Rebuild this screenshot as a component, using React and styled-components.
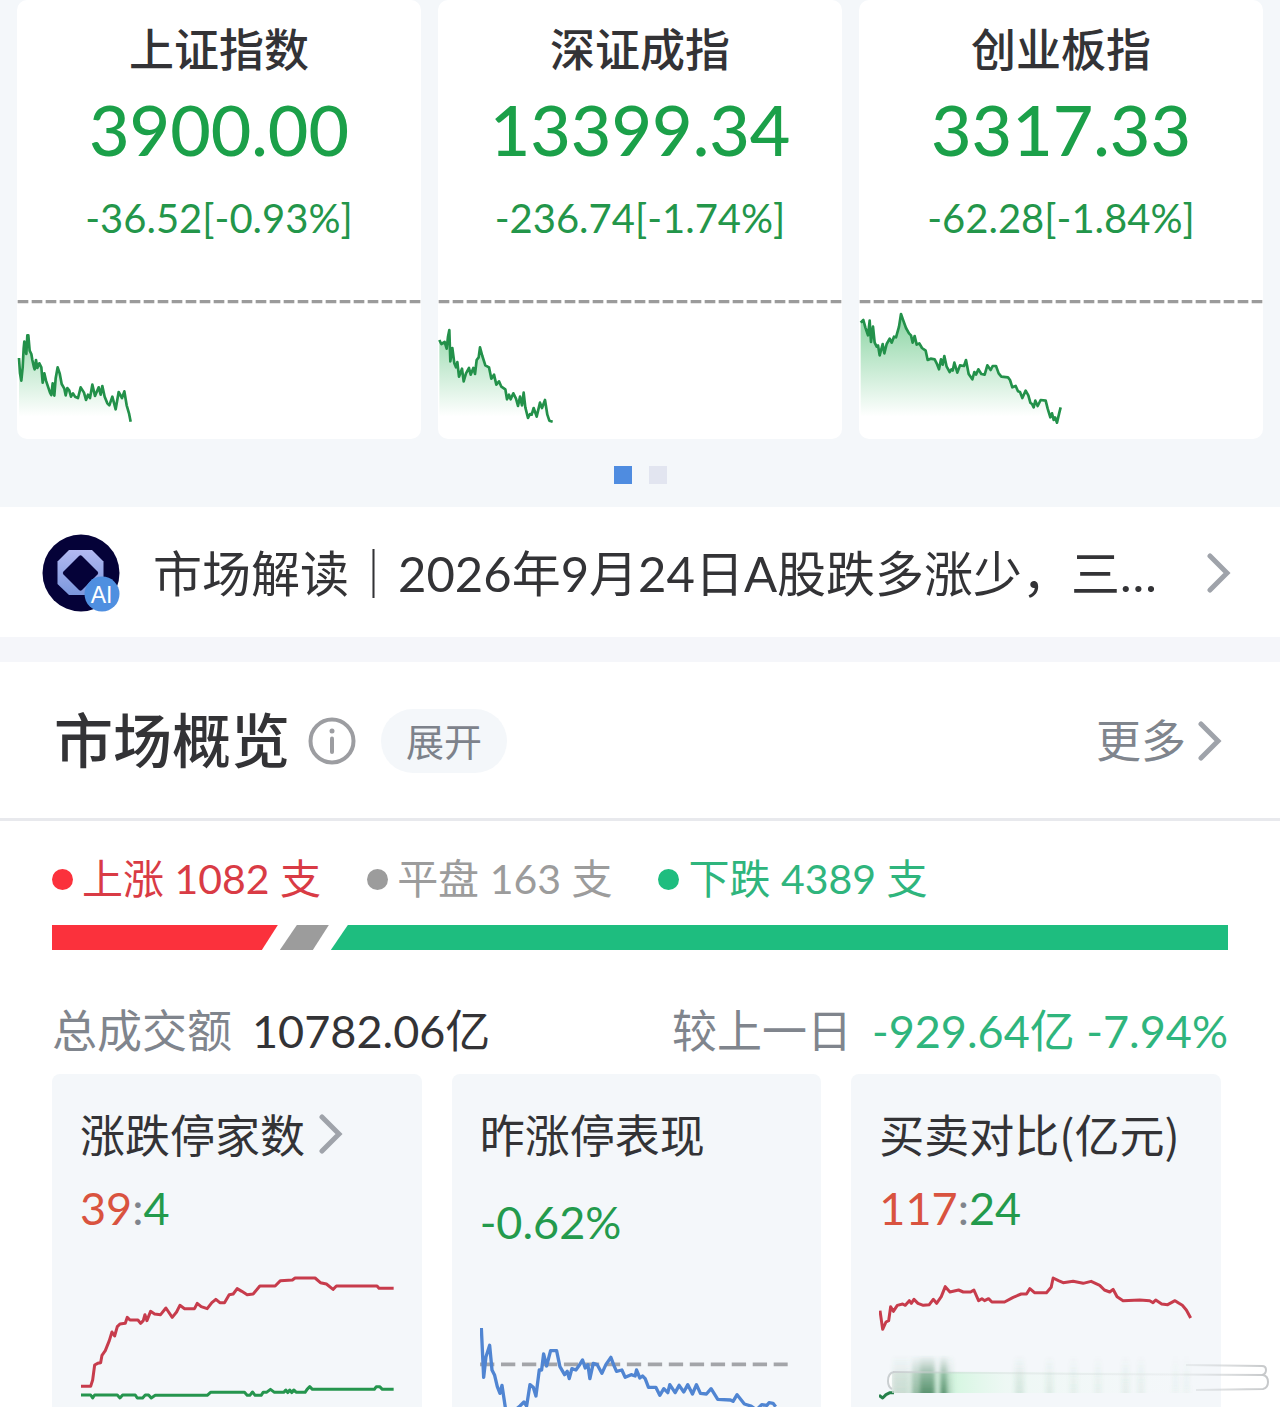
import styled, { createGlobalStyle } from "styled-components";

// ── Global ─────────────────────────────────────────────────────

const GlobalStyle = createGlobalStyle`
   * {
      box-sizing: border-box;
   }

   body {
      margin: 0;
      background: #ffffff;
      font-family: Lato, "Noto Sans CJK SC", sans-serif;
      color: #333336;
   }

   h2, h3, p {
      margin: 0;
      font-weight: 400;
   }

   a {
      color: inherit;
      text-decoration: none;
   }

   button {
      border: none;
      padding: 0;
      font-family: inherit;
      cursor: pointer;
   }
`;

// ── Styled ─────────────────────────────────────────────────────

const Page = styled.main`
   position: relative;
   overflow: hidden;
`;

const Hero = styled.section`
   padding: 0 17px 23px;
   background: #f4f7fa;
`;

const IndexGrid = styled.div`
   display: grid;
   grid-template-columns: repeat(3, minmax(0, 1fr));
   gap: 17px;
`;

const IndexCard = styled.article`
   display: flex;
   flex-direction: column;
   align-items: center;
   padding-top: 18px;
   background: #ffffff;
   border-radius: 10px;
   overflow: hidden;
   white-space: nowrap;
`;

const IndexName = styled.h3`
   font-size: 45px;
   line-height: 64px;
   font-weight: 500;
`;

const IndexPrice = styled.p`
   font-size: 70px;
   line-height: 94px;
   font-weight: 500;
   color: #1ba049;
`;

const IndexChange = styled.p`
   font-size: 40px;
   line-height: 84px;
   color: #23964a;
`;

const IndexSvg = styled.svg`
   display: block;
   width: 100%;
   height: 159px;
   margin-top: 20px;
`;

const Pager = styled.div`
   display: flex;
   justify-content: center;
   gap: 17px;
   padding-top: 27px;
`;

const PagerDot = styled.button`
   width: 18px;
   height: 18px;
   background: ${({ $active }) => ($active ? "#4f8ce0" : "#e2e5f0")};
`;

const NewsRow = styled.a`
   display: flex;
   align-items: center;
   height: 130px;
   padding: 2px 49px 0 42px;
`;

const Logo = styled.svg`
   width: 78px;
   height: 78px;
   flex-shrink: 0;
`;

const NewsText = styled.span`
   flex: 1;
   min-width: 0;
   margin-left: 33px;
   font-size: 49px;
   line-height: 72px;
   white-space: nowrap;
   overflow: hidden;
`;

const ChevronSvg = styled.svg`
   width: 24px;
   height: 42px;
   flex-shrink: 0;
   fill: none;
   stroke: #9fa3aa;
   stroke-width: 5;
   stroke-linecap: round;
`;

const Strip = styled.div`
   height: 25px;
   background: #f5f6fa;
`;

const SectionHead = styled.header`
   display: flex;
   align-items: center;
   height: 159px;
   padding: 2px 58px 0 54px;
   border-bottom: 3px solid #e8e9ed;
`;

const SectionTitle = styled.h2`
   font-size: 59px;
   line-height: 84px;
   font-weight: 500;
`;

const InfoBtn = styled.button`
   display: flex;
   margin-left: 18px;
   background: none;
`;

const ExpandBtn = styled.button`
   height: 64px;
   margin-left: 25px;
   padding: 0 25px;
   border-radius: 32px;
   background: #f4f7fa;
   color: #7d828b;
   font-size: 38px;
   line-height: 64px;
`;

const MoreLink = styled.a`
   display: flex;
   align-items: center;
   gap: 12px;
   margin-left: auto;
   font-size: 45px;
   line-height: 64px;
   color: #80858d;
`;

const Overview = styled.section`
   padding: 28px 52px 0;
`;

const Legend = styled.div`
   display: flex;
   gap: 46px;
   white-space: nowrap;
`;

const LegendItem = styled.span`
   display: flex;
   align-items: center;
   gap: 9px;
   font-size: 41px;
   line-height: 60px;
   color: ${({ $color }) => $color};

   &::before {
      content: "";
      width: 21px;
      height: 21px;
      border-radius: 50%;
      background: ${({ $dot }) => $dot};
   }
`;

const Breadth = styled.div`
   display: flex;
   gap: 2px;
   height: 25px;
   margin-top: 16px;
`;

const Segment = styled.div`
   min-width: 49px;
   flex: ${({ $fill }) => ($fill ? "1" : "none")};
   background: ${({ $color }) => $color};
   clip-path: ${({ $shape }) => $shape};
`;

const TotalRow = styled.div`
   display: flex;
   justify-content: space-between;
   margin-top: 48px;
   font-size: 45px;
   line-height: 66px;
   white-space: nowrap;
`;

const Total = styled.p`
   display: flex;
   gap: 20px;
   color: ${({ $color }) => $color};
`;

const Muted = styled.span`
   color: #80858d;
`;

const StatGrid = styled.div`
   display: grid;
   grid-template-columns: repeat(3, minmax(0, 1fr));
   gap: 30px;
   margin-top: 10px;
   padding-right: 7px;
`;

const StatCard = styled.article`
   display: flex;
   flex-direction: column;
   min-height: 333px;
   padding: 28px 28px 0;
   background: #f4f7fa;
   border-radius: 8px 8px 0 0;
   white-space: nowrap;
`;

const StatTitle = styled.h3`
   display: flex;
   align-items: center;
   gap: 14px;
   font-family: "Noto Sans CJK SC", sans-serif;
   font-size: 45px;
   line-height: 64px;
`;

const StatValue = styled.p`
   margin-top: ${({ $single }) => ($single ? "30px" : "16px")};
   font-size: 45px;
   line-height: 52px;
   color: #239a4c;
`;

const Up = styled.span`
   color: #d9533f;
`;

const StatSvg = styled.svg`
   display: block;
   width: 100%;
   height: 137px;
   margin-top: auto;
`;

const Line = styled.polyline`
   fill: none;
   stroke: ${({ $color }) => $color};
   stroke-width: ${({ $width }) => $width || 9};
   stroke-linejoin: round;
`;

const Smear = styled.svg`
   position: absolute;
   right: 8px;
   bottom: 10px;
   width: 386px;
   height: 46px;
   pointer-events: none;
`;

// ── Data ───────────────────────────────────────────────────────

const INDEXES = [
   {
      key: "sh",
      name: "上证指数",
      price: "3900.00",
      change: "-36.52[-0.93%]",
      left: 51,
      points:
         "57,234 60,280 64,302 68,262 71,205 73,185 76,207 79,222 82,166 85,166 89,212 94,222 97,240 102,262 104,268 108,240 112,264 118,250 124,262 128,308 133,280 138,302 144,320 150,338 154,345 158,310 163,347 167,295 173,262 179,280 185,312 193,326 197,346 202,324 208,332 213,350 219,340 225,350 234,354 242,322 252,338 258,360 264,344 270,354 277,314 285,348 296,322 302,344 307,318 314,350 322,370 328,376 337,350 347,388 356,336 366,354 373,334 380,376 387,400 392,425",
   },
   {
      key: "sz",
      name: "深证成指",
      price: "13399.34",
      change: "-236.74[-1.74%]",
      left: 24,
      points:
         "28,180 34,192 44,186 50,206 54,170 58,150 61,244 67,204 73,250 78,262 82,246 87,290 96,266 101,304 108,280 117,264 122,284 130,264 135,282 140,240 146,232 150,202 157,228 166,256 177,262 184,296 192,284 199,314 207,304 214,320 226,328 231,358 237,344 242,358 250,340 258,356 264,378 270,350 276,376 281,338 286,382 294,414 300,402 305,404 311,384 320,410 330,368 336,384 345,360 352,404 358,422 368,425",
   },
   {
      key: "cyb",
      name: "创业板指",
      price: "3317.33",
      change: "-62.28[-1.84%]",
      left: 27,
      points:
         "32,128 40,120 46,142 54,166 59,122 63,186 69,140 74,188 80,200 84,196 89,226 98,192 103,220 110,192 119,176 125,188 132,170 138,172 147,140 153,102 160,122 168,144 177,160 183,166 188,188 194,168 200,194 208,190 216,204 227,212 233,240 242,236 254,238 260,250 267,268 273,238 278,254 283,228 290,260 299,276 304,268 308,272 313,248 322,278 330,256 342,258 348,240 356,282 367,298 373,276 378,284 385,268 394,282 404,284 412,256 422,270 428,258 438,258 446,280 454,290 474,292 480,300 487,322 497,318 504,334 510,336 517,354 527,332 535,346 541,368 546,372 551,382 556,362 563,378 572,360 587,362 593,386 601,412 606,400 611,420 615,412 621,428 628,398 632,382",
   },
];

const BREADTH = [
   {
      key: "up",
      label: "上涨",
      count: 1082,
      color: "#d93b45",
      fill: "#fb313c",
      shape: "polygon(0 0, 100% 0, calc(100% - 16px) 100%, 0 100%)",
   },
   {
      key: "flat",
      label: "平盘",
      count: 163,
      color: "#9c9c9c",
      fill: "#9c9c9c",
      shape: "polygon(17px 0, 100% 0, calc(100% - 16px) 100%, 0 100%)",
   },
   {
      key: "down",
      label: "下跌",
      count: 4389,
      color: "#2fb57d",
      fill: "#1ebd7f",
      shape: "polygon(17px 0, 100% 0, 100% 100%, 0 100%)",
   },
];

const BREADTH_TOTAL = BREADTH.reduce((sum, b) => sum + b.count, 0);

const LIMIT_UP =
   "153,949 182,949 188,930 194,885 203,880 212,878 216,856 226,842 238,812 246,786 254,798 262,770 270,762 286,760 292,742 300,750 324,750 332,760 340,752 345,734 351,752 362,724 374,732 392,734 408,714 427,742 440,726 450,706 464,716 494,716 502,700 514,710 532,716 546,698 558,688 570,698 584,698 598,674 610,672 622,656 636,664 652,674 670,672 690,648 736,648 752,632 788,630 796,624 856,624 872,638 890,642 910,658 920,648 1042,648 1048,655 1092,655";
const LIMIT_DOWN =
   "153,975 182,975 188,984 194,975 262,975 270,984 278,975 316,975 322,984 338,984 346,975 356,975 364,984 376,976 532,976 542,967 644,967 652,976 660,976 668,966 676,976 694,976 700,967 710,967 722,958 734,967 762,967 768,960 774,968 780,960 786,968 792,960 800,967 826,967 832,958 840,950 848,958 1034,958 1040,950 1050,950 1058,958 1092,958";
const YESTERDAY =
   "124,774 131,922 138,860 149,826 156,900 164,916 172,950 180,970 186,946 196,1012 214,1030 240,1008 252,996 260,1008 270,944 280,952 288,978 298,900 305,900 311,852 320,888 332,842 350,842 360,890 374,914 382,904 388,926 396,896 408,900 418,886 428,870 436,894 444,884 450,926 460,880 472,884 486,910 498,884 513,862 522,886 530,904 546,900 556,922 574,914 586,918 590,900 600,924 608,918 616,926 626,952 648,952 660,976 672,956 684,968 690,944 706,968 718,946 732,966 744,944 758,972 770,944 782,970 800,972 814,956 834,988 872,990 880,994 892,974 914,1002 934,1008 950,1020 966,1004 982,1006 988,998 1000,1000 1008,1010";
const BUY =
   "120,722 128,778 138,756 146,752 152,710 160,724 172,706 188,702 196,706 208,692 214,700 222,688 234,700 250,706 268,704 280,688 290,700 304,680 316,650 330,666 356,660 370,666 392,666 402,660 416,692 426,686 434,692 446,686 456,696 494,696 520,682 544,672 560,672 570,656 584,668 620,668 634,652 640,624 656,632 670,638 700,634 730,640 754,634 780,646 794,660 810,666 820,658 832,680 850,692 900,690 930,692 940,698 948,690 966,702 984,704 1006,692 1018,700 1028,706 1040,720 1053,744";

// ── Parts ──────────────────────────────────────────────────────

const Chevron = () => (
   <ChevronSvg viewBox="0 0 24 42" aria-hidden="true">
      <path d="M3 4 L20 21 L3 38" />
   </ChevronSvg>
);

const IndexChart = ({ id, left, points }) => {
   const first = points.split(",")[0];
   const last = points.split(" ").pop().split(",")[0];

   return (
      <IndexSvg
         viewBox={`${left} 0 1212 477`}
         preserveAspectRatio="none"
         aria-hidden="true"
      >
         <defs>
            <linearGradient
               id={`fade-${id}`}
               gradientUnits="userSpaceOnUse"
               x1="0"
               y1="120"
               x2="0"
               y2="410"
            >
               <stop offset="0" stopColor="#35b55f" stopOpacity="0.55" />
               <stop offset="1" stopColor="#35b55f" stopOpacity="0" />
            </linearGradient>
         </defs>
         <polygon
            points={`${first},420 ${points} ${last},420`}
            fill={`url(#fade-${id})`}
         />
         <line
            x1={left + 2}
            x2={left + 1212}
            y1="65"
            y2="65"
            stroke="#9b9b9b"
            strokeWidth="10"
            strokeDasharray="32 10"
         />
         <Line $color="#23914a" $width={8} points={points} />
      </IndexSvg>
   );
};

const BrandLogo = () => (
   <Logo viewBox="0 0 78 78" aria-hidden="true">
      <defs>
         <linearGradient id="brand" x1="0" y1="0" x2="0" y2="1">
            <stop offset="0" stopColor="#b3b9f2" />
            <stop offset="1" stopColor="#7b97dc" />
         </linearGradient>
      </defs>
      <circle cx="39" cy="39" r="38.5" fill="#050238" />
      <path
         d="M27 16 H50 L61.500 27.500 V50.500 L50 61 H27 L15.500 50 V27.500 Z"
         fill="url(#brand)"
      />
      <path
         d="M37 22 Q38.500 20.500 40 22 L55.500 37.500 Q57 39 55.500 40.500 L40 56 Q38.500 57.500 37 56 L21.500 40.500 Q20 39 21.500 37.500 Z"
         fill="#050238"
      />
      <circle cx="60" cy="60" r="17.500" fill="#4f8fe0" />
      <text
         x="59.500"
         y="69"
         textAnchor="middle"
         fontFamily="Liberation Sans, sans-serif"
         fontSize="23"
         fill="#ffffff"
      >
         AI
      </text>
   </Logo>
);

const InfoIcon = () => (
   <svg width="48" height="48" viewBox="0 0 48 48" fill="none" aria-hidden="true">
      <circle cx="24" cy="24" r="21.500" stroke="#9c9da1" strokeWidth="4" />
      <circle cx="24" cy="14" r="2.500" fill="#9c9da1" />
      <path d="M24 21.500 V35" stroke="#9c9da1" strokeWidth="4" strokeLinecap="round" />
   </svg>
);

const StatChart = ({ left, children }) => (
   <StatSvg
      viewBox={`${left} 600 942 411`}
      preserveAspectRatio="none"
      aria-hidden="true"
   >
      {children}
   </StatSvg>
);

// x, width and opacity of the soft vertical bands
const BANDS = [
   [7, 16, 0.15],
   [26, 6, 0.5],
   [33, 16, 0.8],
   [54, 7, 0.8],
   [61, 6, 0.2],
   [129, 9, 0.14],
   [160, 7, 0.1],
   [184, 7, 0.07],
   [209, 6, 0.07],
   [236, 7, 0.08],
   [252, 6, 0.08],
   [287, 5, 0.05],
   [298, 5, 0.05],
];

const BlurredMark = () => (
   <Smear viewBox="0 0 386 46" aria-hidden="true">
      <defs>
         <filter id="soft" x="-20%" y="-20%" width="140%" height="140%">
            <feGaussianBlur stdDeviation="2 0" />
         </filter>
         <linearGradient id="band" x1="0" y1="0" x2="0" y2="1">
            <stop offset="0" stopColor="#3c7d55" stopOpacity="0" />
            <stop offset="0.5" stopColor="#3c7d55" stopOpacity="0.6" />
            <stop offset="1" stopColor="#3c7d55" />
         </linearGradient>
         <linearGradient id="glow" x1="0" y1="0" x2="1" y2="0">
            <stop offset="0" stopColor="#dfe8e3" stopOpacity="0.7" />
            <stop offset="0.2" stopColor="#d0f6dc" stopOpacity="0.8" />
            <stop offset="0.35" stopColor="#e9f8f0" stopOpacity="0.6" />
            <stop offset="1" stopColor="#f4f9f8" stopOpacity="0" />
         </linearGradient>
         <linearGradient id="rim" gradientUnits="userSpaceOnUse" x1="0" y1="0" x2="386" y2="0">
            <stop offset="0" stopColor="#c9ced0" />
            <stop offset="0.2" stopColor="#c9ced0" stopOpacity="0.3" />
            <stop offset="0.75" stopColor="#c9ced0" stopOpacity="0.2" />
            <stop offset="1" stopColor="#c4c6c8" />
         </linearGradient>
      </defs>
      <path d="M7 21 Q0 24 3 36 L7 40 V21 Z" fill="#ffffff" />
      <rect x="6" y="21" width="324" height="21" fill="url(#glow)" />
      <g filter="url(#soft)">
         {BANDS.map(([x, width, opacity]) => (
            <rect
               key={x}
               x={x}
               y="4"
               width={width}
               height="38"
               fill="url(#band)"
               opacity={opacity}
            />
         ))}
      </g>
      <g fill="none" stroke="url(#rim)" strokeWidth="2">
         <path d="M8 21 Q2 22 2 30 Q2 36 6 38" />
         <path d="M7 21 L200 23 L377 24 Q382 25 382 31 Q382 37 377 38 L310 39" />
         <path d="M300 14 L376 15 Q380 15 380 19 Q380 23 376 24" />
      </g>
   </Smear>
);

// ── Component ─────────────────────────────────────────────────

const App = () => (
   <>
      <GlobalStyle />
      <Page>
         <Hero>
            <IndexGrid>
               {INDEXES.map((item) => (
                  <IndexCard key={item.key}>
                     <IndexName>{item.name}</IndexName>
                     <IndexPrice>{item.price}</IndexPrice>
                     <IndexChange>{item.change}</IndexChange>
                     <IndexChart
                        id={item.key}
                        left={item.left}
                        points={item.points}
                     />
                  </IndexCard>
               ))}
            </IndexGrid>
            <Pager>
               <PagerDot $active aria-label="1" />
               <PagerDot aria-label="2" />
            </Pager>
         </Hero>

         <NewsRow href="#news">
            <BrandLogo />
            <NewsText>市场解读｜2026年9月24日A股跌多涨少，三…</NewsText>
            <Chevron />
         </NewsRow>

         <Strip />

         <SectionHead>
            <SectionTitle>市场概览</SectionTitle>
            <InfoBtn aria-label="info">
               <InfoIcon />
            </InfoBtn>
            <ExpandBtn>展开</ExpandBtn>
            <MoreLink href="#more">
               更多
               <Chevron />
            </MoreLink>
         </SectionHead>

         <Overview>
            <Legend>
               {BREADTH.map((b) => (
                  <LegendItem key={b.key} $color={b.color} $dot={b.fill}>
                     {b.label} {b.count} 支
                  </LegendItem>
               ))}
            </Legend>
            <Breadth>
               {BREADTH.map((b) => (
                  <Segment
                     key={b.key}
                     $color={b.fill}
                     $shape={b.shape}
                     $fill={b.key === "down"}
                     style={
                        b.key === "down"
                           ? undefined
                           : { width: `${(b.count / BREADTH_TOTAL) * 100}%` }
                     }
                  />
               ))}
            </Breadth>

            <TotalRow>
               <Total>
                  <Muted>总成交额</Muted>10782.06亿
               </Total>
               <Total $color="#2fb57d">
                  <Muted>较上一日</Muted>-929.64亿 -7.94%
               </Total>
            </TotalRow>

            <StatGrid>
               <StatCard>
                  <StatTitle>
                     涨跌停家数
                     <Chevron />
                  </StatTitle>
                  <StatValue>
                     <Up>39</Up>
                     <Muted>:</Muted>4
                  </StatValue>
                  <StatChart left={150}>
                     <Line $color="#c73c4c" points={LIMIT_UP} />
                     <Line $color="#25954e" points={LIMIT_DOWN} />
                  </StatChart>
               </StatCard>

               <StatCard>
                  <StatTitle>昨涨停表现</StatTitle>
                  <StatValue $single>-0.62%</StatValue>
                  <StatChart left={120}>
                     <line
                        x1="120"
                        x2="1044"
                        y1="883"
                        y2="883"
                        stroke="#a3a5a9"
                        strokeWidth="11"
                        strokeDasharray="43 20"
                     />
                     <Line $color="#5085d2" $width={10} points={YESTERDAY} />
                  </StatChart>
               </StatCard>

               <StatCard>
                  <StatTitle>买卖对比(亿元)</StatTitle>
                  <StatValue>
                     <Up>117</Up>
                     <Muted>:</Muted>24
                  </StatValue>
                  <StatChart left={117}>
                     <Line $color="#c73c4c" points={BUY} />
                     <Line
                        $color="#25804a"
                        points="117,976 128,984 138,974 150,968 162,968"
                     />
                  </StatChart>
               </StatCard>
            </StatGrid>
         </Overview>
         <BlurredMark />
      </Page>
   </>
);

export default App;
